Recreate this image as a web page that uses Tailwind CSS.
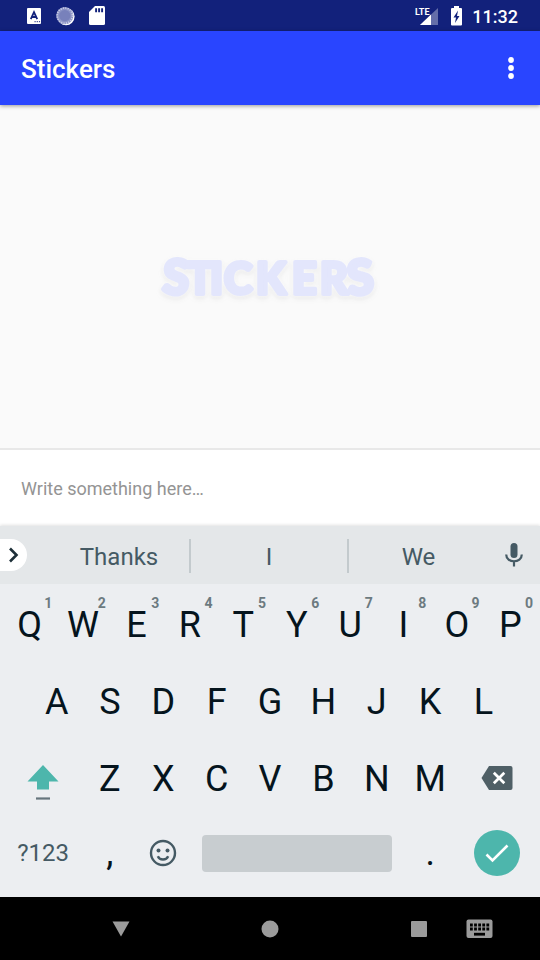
<!DOCTYPE html>
<html lang="en">
<head>
<meta charset="utf-8">
<meta name="viewport" content="width=device-width, initial-scale=1">
<title>Stickers</title>
<script src="https://cdn.jsdelivr.net/npm/@tailwindcss/browser@4"></script>
</head>
<body class="flex min-h-screen flex-col bg-[#fafafa] font-['Roboto',sans-serif]">

<!-- Status bar -->
<div class="flex h-[31px] items-center justify-between bg-[#12217b] pr-[22px] pl-[26px] text-white">
  <div class="flex items-center gap-[13px]">
    <svg class="h-4 w-4" viewBox="0 0 16 16" role="img" aria-label="Input method">
      <rect x="1" y="0" width="14" height="16" rx="1" fill="#fff"/>
      <path d="M4.800 11.200 8 4.200l3.200 7M6 9h4" fill="none" stroke="#12217b" stroke-width="1.800"/>
      <path d="M8.500 13.700h1.200M10.700 13.700h1.200M12.900 13.700h1.200" stroke="#12217b" stroke-width="1"/>
    </svg>
    <svg class="h-5 w-5" viewBox="0 0 20 20" role="img" aria-label="Sync">
      <circle cx="11" cy="10.600" r="8.600" fill="#fff"/>
      <circle cx="9.800" cy="9.600" r="8.600" fill="#8c94c6"/>
      <circle cx="9.800" cy="9.600" r="7.600" fill="none" stroke="#c9cde6" stroke-width="1.600" stroke-dasharray="1.200 1.200"/>
      <circle cx="9.800" cy="9.600" r="5.600" fill="#7881bb"/>
    </svg>
    <svg class="ml-px h-5 w-4" viewBox="0 0 16 20" role="img" aria-label="SD card">
      <path d="M6 0h8.500Q16 0 16 1.500v16q0 1.500-1.500 1.500h-13Q0 19 0 17.500V6z" fill="#fff"/>
      <path d="M7.100 2.300v4M10.100 2.300v4M13.100 2.300v4" stroke="#12217b" stroke-width="1.900"/>
    </svg>
  </div>
  <div class="flex items-center">
    <svg class="mr-3 h-5 w-6" viewBox="0 0 24 20" role="img" aria-label="LTE signal">
      <path d="M23 2v17H5z" fill="#fff" fill-opacity=".35"/>
      <path d="M16 8.600V19H5z" fill="#fff"/>
      <text x="0" y="9" font-size="9" font-weight="700" fill="#fff" font-family="Liberation Sans Narrow, Roboto, sans-serif">LTE</text>
    </svg>
    <svg class="mr-[10px] h-5 w-[11px]" viewBox="0 0 11 20" role="img" aria-label="Battery charging">
      <path d="M3 0h5v2h2q1 0 1 1v15.500q0 1-1 1H1q-1 0-1-1V3q0-1 1-1h2z" fill="#fff"/>
      <path d="M7 4.500 2.500 11.500H5L4 17l4.500-7H6z" fill="#12217b"/>
    </svg>
    <time class="pt-[2px] text-[18px] leading-6 font-medium">11:32</time>
  </div>
</div>

<!-- App bar -->
<header class="z-10 flex h-[74px] items-center justify-between bg-[#2945ff] pl-[21px] pr-4 text-white shadow-[0_1px_4px_rgba(0,0,0,0.4)]">
  <h1 class="pt-[2px] text-[26px] leading-8 font-medium">Stickers</h1>
  <button type="button" aria-label="More options" class="flex h-10 w-[26px] items-center justify-center">
    <svg class="h-6 w-2" viewBox="0 0 8 24" fill="currentColor"><circle cx="4" cy="4" r="2.900"/><circle cx="4" cy="12" r="2.900"/><circle cx="4" cy="20" r="2.900"/></svg>
  </button>
</header>

<main class="flex flex-1 items-center justify-center">
  <svg class="w-[240px] [filter:drop-shadow(0_0_2px_white)_drop-shadow(0_2px_2px_rgba(0,0,0,0.08))]" viewBox="-10 -10 240 80" role="img" aria-label="Stickers logo">
    <g font-family="Lato, Roboto, sans-serif" font-weight="900" font-size="43" stroke-linejoin="round" fill="#e3e6fc" stroke="#e3e6fc" stroke-width="4">
      <text x="3" y="47" font-size="48" transform="rotate(4 14 30)">S</text>
      <text x="27 50 64 96 132 160" y="47">TICKER</text>
      <text x="187" y="47" font-size="48" transform="rotate(-4 204 30)">S</text>
    </g>
  </svg>
</main>

<!-- Composer -->
<div class="border-t-2 border-[#e8e8e8] bg-white">
  <input type="text" aria-label="Message" placeholder="Write something here…" class="block h-[76px] w-full px-[21px] text-[18px] text-gray-800 outline-none placeholder:text-[#949494]">
</div>

<!-- Keyboard -->
<section aria-label="Keyboard" class="bg-[#eceef1] pb-[9px] text-[#05141d] shadow-[0_-1px_3px_rgba(0,0,0,0.12)]">
  <div class="mb-[3px] flex h-[58px] items-center bg-[#e4e7e9] text-[24px] leading-8 text-[#455a64]">
    <button type="button" aria-label="Expand toolbar" class="flex h-8 w-[27px] items-center justify-center rounded-r-full bg-white text-[#1d2f38]">
      <svg class="h-4 w-3" viewBox="0 0 12 16" fill="none" stroke="currentColor" stroke-width="2.600"><path d="m2 1.500 6.500 6.500L2 14.500"/></svg>
    </button>
    <div class="ml-[22px] grid h-8 flex-1 grid-cols-[142fr_158fr_139fr] divide-x-2 divide-[#c3cacd]">
      <button type="button" class="flex items-center justify-center pt-[2px]">Thanks</button>
      <button type="button" class="flex items-center justify-center pt-[2px]">I</button>
      <button type="button" class="flex items-center justify-center pt-[2px]">We</button>
    </div>
    <button type="button" aria-label="Voice input" class="flex h-8 w-[52px] items-center justify-center">
      <svg class="h-6 w-5" viewBox="0 0 20 24"><rect x="6.500" y="0" width="7" height="15" rx="3.500" fill="currentColor"/><path d="M2.200 11.500c0 9 15.600 9 15.600 0M10 18v5.500" fill="none" stroke="currentColor" stroke-width="2.200"/></svg>
    </button>
  </div>

  <div class="grid h-[77px] grid-cols-10 px-[3px] pb-[2px] text-[36px] leading-10">
    <button type="button" class="relative">Q<span class="absolute top-2 right-1 text-[14px] leading-4 font-bold text-[#6c7a80]">1</span></button>
    <button type="button" class="relative">W<span class="absolute top-2 right-1 text-[14px] leading-4 font-bold text-[#6c7a80]">2</span></button>
    <button type="button" class="relative">E<span class="absolute top-2 right-1 text-[14px] leading-4 font-bold text-[#6c7a80]">3</span></button>
    <button type="button" class="relative">R<span class="absolute top-2 right-1 text-[14px] leading-4 font-bold text-[#6c7a80]">4</span></button>
    <button type="button" class="relative">T<span class="absolute top-2 right-1 text-[14px] leading-4 font-bold text-[#6c7a80]">5</span></button>
    <button type="button" class="relative">Y<span class="absolute top-2 right-1 text-[14px] leading-4 font-bold text-[#6c7a80]">6</span></button>
    <button type="button" class="relative">U<span class="absolute top-2 right-1 text-[14px] leading-4 font-bold text-[#6c7a80]">7</span></button>
    <button type="button" class="relative">I<span class="absolute top-2 right-1 text-[14px] leading-4 font-bold text-[#6c7a80]">8</span></button>
    <button type="button" class="relative">O<span class="absolute top-2 right-1 text-[14px] leading-4 font-bold text-[#6c7a80]">9</span></button>
    <button type="button" class="relative">P<span class="absolute top-2 right-1 text-[14px] leading-4 font-bold text-[#6c7a80]">0</span></button>
  </div>

  <div class="grid h-[77px] grid-cols-9 px-[30px] pb-[2px] text-[36px] leading-10">
    <button type="button">A</button>
    <button type="button">S</button>
    <button type="button">D</button>
    <button type="button">F</button>
    <button type="button">G</button>
    <button type="button">H</button>
    <button type="button">J</button>
    <button type="button">K</button>
    <button type="button">L</button>
  </div>

  <div class="grid h-[77px] grid-cols-[3fr_2fr_2fr_2fr_2fr_2fr_2fr_2fr_3fr] px-[3px] pb-[2px] text-[36px] leading-10">
    <button type="button" aria-label="Shift" class="flex items-center justify-center pt-2">
      <svg class="h-9 w-8" viewBox="0 0 32 36"><path d="M16 0 31.500 16.500H22V24.500H10V16.500H.5z" fill="#4db6ac"/><path d="M9 33.500h14" stroke="#66757d" stroke-width="2.200"/></svg>
    </button>
    <button type="button">Z</button>
    <button type="button">X</button>
    <button type="button">C</button>
    <button type="button">V</button>
    <button type="button">B</button>
    <button type="button">N</button>
    <button type="button">M</button>
    <button type="button" aria-label="Backspace" class="flex items-center justify-center pb-[2px]">
      <svg class="h-6 w-8" viewBox="0 0 32 24"><path d="M8 0h21.500Q31.500 0 31.500 2v20q0 2-2 2H8L.5 12z" fill="#4f5f66"/><path d="m12.800 6.700 10.500 10.500M23.300 6.700 12.800 17.200" stroke="#fff" stroke-width="2.700"/></svg>
    </button>
  </div>

  <div class="grid h-[70px] grid-cols-[3fr_2fr_2fr_8fr_2fr_3fr] items-center px-[3px] text-[36px] leading-10">
    <button type="button" class="text-[24px] text-[#455a64]">?123</button>
    <button type="button">,</button>
    <button type="button" aria-label="Emoji" class="flex justify-center">
      <svg class="h-7 w-7" viewBox="0 0 28 28" fill="none" stroke="#455a64" stroke-width="2.400"><circle cx="14" cy="14" r="12"/><path d="M8.800 17.200c2 4.400 8.400 4.400 10.400 0"/><g fill="#455a64" stroke="none"><circle cx="9.500" cy="11.500" r="2"/><circle cx="18.500" cy="11.500" r="2"/></g></svg>
    </button>
    <button type="button" aria-label="Space" class="mx-3 h-[37px] rounded-[4px] bg-[#c8cdd0]"></button>
    <button type="button">.</button>
    <button type="button" aria-label="Done" class="flex h-[46px] w-[46px] items-center justify-center justify-self-center rounded-full bg-[#4db6ac]">
      <svg class="h-6 w-6" viewBox="0 0 24 24" fill="none" stroke="#fff" stroke-width="2.600"><path d="m1.500 13.500 6 6L22.500 4.500"/></svg>
    </button>
  </div>
</section>

<!-- System navigation -->
<nav aria-label="System" class="relative grid h-[63px] grid-cols-3 items-center bg-black px-[46px] text-[#9b9b9b]">
  <button type="button" aria-label="Hide keyboard" class="flex justify-center">
    <svg class="h-5 w-5" viewBox="0 0 20 20"><path d="M1.500 2.500h17L10 17.500z" fill="currentColor"/></svg>
  </button>
  <button type="button" aria-label="Home" class="flex justify-center">
    <svg class="h-5 w-5" viewBox="0 0 20 20"><circle cx="10" cy="10" r="8.500" fill="currentColor"/></svg>
  </button>
  <button type="button" aria-label="Recent apps" class="flex justify-center">
    <svg class="h-5 w-5" viewBox="0 0 20 20"><rect x="2" y="2" width="16" height="16" rx="1" fill="currentColor"/></svg>
  </button>
  <button type="button" aria-label="Switch keyboard" class="absolute right-[47px]">
    <svg class="h-5 w-[27px]" viewBox="0 0 27 20"><rect x=".5" y=".5" width="26" height="18.500" rx="2" fill="currentColor"/><path d="M4 6h20M4 10h20" stroke="#000" stroke-width="2.800" stroke-dasharray="2.800 1.300"/><path d="M8 15.200h11" stroke="#000" stroke-width="2.800"/></svg>
  </button>
</nav>
</body>
</html>
